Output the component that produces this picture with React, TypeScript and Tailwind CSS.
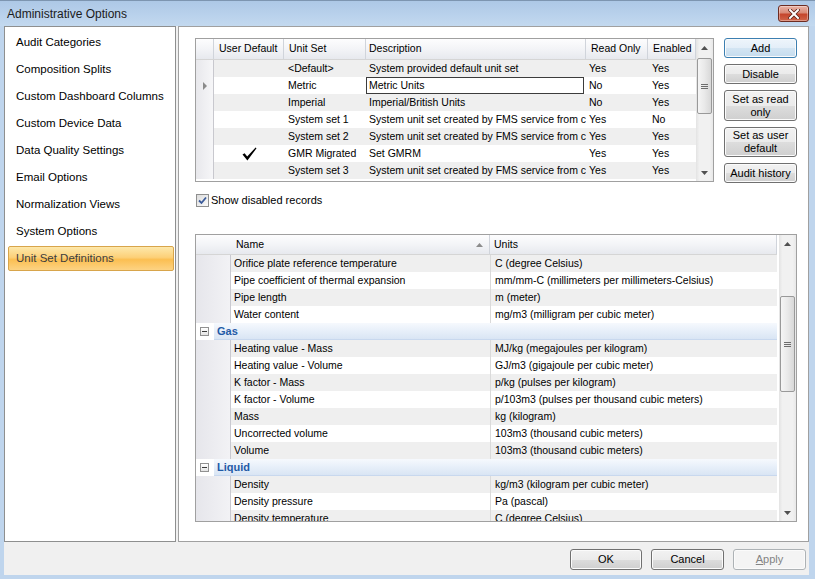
import React from 'react';

const sidebarItems = [
  'Audit Categories',
  'Composition Splits',
  'Custom Dashboard Columns',
  'Custom Device Data',
  'Data Quality Settings',
  'Email Options',
  'Normalization Views',
  'System Options',
  'Unit Set Definitions',
];

type TopRow = { ud?: boolean; us: string; d: string; ro: string; en: string; current?: boolean };

const topRows: TopRow[] = [
  { us: '<Default>', d: 'System provided default unit set', ro: 'Yes', en: 'Yes' },
  { us: 'Metric', d: 'Metric Units', ro: 'No', en: 'Yes', current: true },
  { us: 'Imperial', d: 'Imperial/British Units', ro: 'No', en: 'Yes' },
  { us: 'System set 1', d: 'System unit set created by FMS service from c', ro: 'Yes', en: 'No' },
  { us: 'System set 2', d: 'System unit set created by FMS service from c', ro: 'Yes', en: 'Yes' },
  { us: 'GMR Migrated', d: 'Set GMRM', ro: 'Yes', en: 'Yes', ud: true },
  { us: 'System set 3', d: 'System unit set created by FMS service from c', ro: 'Yes', en: 'Yes' },
];

type BRow = { group?: string; name?: string; units?: string; idx?: number };

const bottomRows: BRow[] = [
  { name: 'Orifice plate reference temperature', units: 'C (degree Celsius)', idx: 0 },
  { name: 'Pipe coefficient of thermal expansion', units: 'mm/mm-C (millimeters per millimeters-Celsius)', idx: 1 },
  { name: 'Pipe length', units: 'm (meter)', idx: 2 },
  { name: 'Water content', units: 'mg/m3 (milligram per cubic meter)', idx: 3 },
  { group: 'Gas' },
  { name: 'Heating value - Mass', units: 'MJ/kg (megajoules per kilogram)', idx: 0 },
  { name: 'Heating value - Volume', units: 'GJ/m3 (gigajoule per cubic meter)', idx: 1 },
  { name: 'K factor - Mass', units: 'p/kg (pulses per kilogram)', idx: 2 },
  { name: 'K factor - Volume', units: 'p/103m3 (pulses per thousand cubic meters)', idx: 3 },
  { name: 'Mass', units: 'kg (kilogram)', idx: 4 },
  { name: 'Uncorrected volume', units: '103m3 (thousand cubic meters)', idx: 5 },
  { name: 'Volume', units: '103m3 (thousand cubic meters)', idx: 6 },
  { group: 'Liquid' },
  { name: 'Density', units: 'kg/m3 (kilogram per cubic meter)', idx: 0 },
  { name: 'Density pressure', units: 'Pa (pascal)', idx: 1 },
  { name: 'Density temperature', units: 'C (degree Celsius)', idx: 2 },
];

const btnBase =
  'flex items-center justify-center text-center rounded-[3px] border text-[11px] leading-[13px] shadow-[inset_0_0_0_1px_#fbfbfb]';
const btnNormal =
  btnBase +
  ' border-[#707070] text-black bg-[linear-gradient(to_bottom,#f2f2f2_0%,#ebebeb_50%,#dddddd_51%,#cfcfcf_100%)]';
const btnDefault =
  btnBase +
  ' border-[#3c7fb1] text-black bg-[linear-gradient(to_bottom,#eef5fb_0%,#e3eef8_50%,#d3e5f3_51%,#c5dcee_100%)]';
const btnDisabled = btnBase + ' border-[#adb2b5] text-[#838383] bg-[#f4f4f4]';

function CloseButton() {
  return (
    <div className="w-[31px] h-[17px] rounded-[3px] border border-[#6d2c22] bg-[linear-gradient(to_bottom,#eab3a6_0%,#d98a77_45%,#c5452c_55%,#d0654a_100%)] shadow-[inset_0_0_0_1px_rgba(255,255,255,0.35)] flex items-center justify-center">
      <svg width="12" height="10" viewBox="0 0 12 10">
        <path d="M2 1 L10 9 M10 1 L2 9" stroke="#5a2118" strokeWidth="3.6" strokeLinecap="square" />
        <path d="M2 1 L10 9 M10 1 L2 9" stroke="#ffffff" strokeWidth="2" strokeLinecap="square" />
      </svg>
    </div>
  );
}

function Scrollbar({ spacer, thumb }: { spacer: string; thumb: string }) {
  return (
    <div className="w-[17px] shrink-0 flex flex-col bg-[linear-gradient(to_right,#e3e3e3,#f1f1f1_20%,#f1f1f1_80%,#e8e8e8)]">
      <div className="h-[17px] shrink-0 flex items-center justify-center">
        <svg width="7" height="4" viewBox="0 0 7 4">
          <path d="M0 4 L3.5 0 L7 4 Z" fill="#505050" />
        </svg>
      </div>
      <div className={spacer + ' shrink-0'} />
      <div
        className={
          thumb +
          ' shrink-0 mx-[1px] rounded-[2px] border border-[#999999] bg-[linear-gradient(to_right,#f5f5f5,#e9e9e9_50%,#d8d8d8)] flex items-center justify-center'
        }
      >
        <div className="flex flex-col gap-[1px]">
          <div className="w-[7px] h-[1px] bg-[#6d6d6d]" />
          <div className="w-[7px] h-[1px] bg-[#6d6d6d]" />
          <div className="w-[7px] h-[1px] bg-[#6d6d6d]" />
        </div>
      </div>
      <div className="flex-1" />
      <div className="h-[17px] shrink-0 flex items-center justify-center">
        <svg width="7" height="4" viewBox="0 0 7 4">
          <path d="M0 0 L3.5 4 L7 0 Z" fill="#505050" />
        </svg>
      </div>
    </div>
  );
}

const hdrCell =
  'h-full flex items-center border-r border-[#d0d4db] bg-[linear-gradient(to_bottom,#fdfdfe,#f3f4f7_50%,#e7e9ee)] pl-[5px] whitespace-nowrap overflow-hidden';

function CheckMark() {
  return (
    <svg width="15" height="14" viewBox="0 0 15 14">
      <path d="M0.5 7.5 L2.6 6.2 L5.2 9.6 L13.6 0.5 L14.5 1.3 L5.4 13.5 Z" fill="#000000" />
    </svg>
  );
}

function TopGrid() {
  return (
    <div className="w-[519px] h-[144px] border border-[#a0a0a0] bg-white flex text-[10.5px]">
      <div className="flex-1 flex flex-col overflow-hidden">
        <div className="h-[21px] shrink-0 flex border-b border-[#d5d5d5]">
          <div className={hdrCell + ' w-[18px]'} />
          <div className={hdrCell + ' w-[70px]'}>User Default</div>
          <div className={hdrCell + ' w-[82px]'}>Unit Set</div>
          <div className={hdrCell + ' w-[220px] !pl-[3px]'}>Description</div>
          <div className={hdrCell + ' w-[62px]'}>Read Only</div>
          <div className={hdrCell + ' w-[48px]'}>Enabled</div>
        </div>
        {topRows.map((r, i) => (
          <div key={i} className={'h-[17px] shrink-0 flex ' + (i % 2 === 0 ? 'bg-[#efefef]' : 'bg-white')}>
            <div className="w-[18px] h-full flex items-center pl-[7px] border-r border-[#c8c8ce] bg-[linear-gradient(to_right,#e8e8ec,#f6f6f8)]">
              {r.current && (
                <svg width="4" height="8" viewBox="0 0 4 8">
                  <path d="M0 0 L4 4 L0 8 Z" fill="#8a8a8a" />
                </svg>
              )}
            </div>
            <div className="w-[70px] h-full flex items-center justify-center">{r.ud && <CheckMark />}</div>
            <div className="w-[82px] h-full flex items-center pl-[4px] whitespace-nowrap overflow-hidden">{r.us}</div>
            <div className="w-[220px] h-full flex items-center whitespace-nowrap overflow-hidden">
              {r.current ? (
                <div className="w-[218px] h-[17px] border border-[#3c3c3c] flex items-center pl-[2px] bg-white">{r.d}</div>
              ) : (
                <span className="pl-[3px]">{r.d}</span>
              )}
            </div>
            <div className="w-[62px] h-full flex items-center pl-[3px]">{r.ro}</div>
            <div className="w-[48px] h-full flex items-center pl-[4px]">{r.en}</div>
          </div>
        ))}
      </div>
      <Scrollbar spacer="h-[2px]" thumb="h-[56px]" />
    </div>
  );
}

function MinusBox() {
  return (
    <div className="w-[9px] h-[9px] border border-[#919191] bg-[linear-gradient(to_bottom,#ffffff,#e4e4e4)] flex items-center justify-center">
      <div className="w-[5px] h-[1px] bg-[#3a3a3a]" />
    </div>
  );
}

function BottomGrid() {
  return (
    <div className="w-[602px] h-[288px] border border-[#a0a0a0] bg-white flex text-[10.5px]">
      <div className="flex-1 flex flex-col overflow-hidden">
        <div className="h-[20px] shrink-0 flex border-b border-[#d5d5d5] mr-[2px]">
          <div className={hdrCell + ' w-[294px] !pl-[40px] justify-between pr-[6px]'}>
            <span>Name</span>
            <svg width="7" height="4" viewBox="0 0 7 4">
              <path d="M0 4 L3.5 0 L7 4 Z" fill="#8c8c8c" />
            </svg>
          </div>
          <div className={hdrCell + ' flex-1 !pl-[4px]'}>Units</div>
        </div>
        {bottomRows.map((r, i) =>
          r.group ? (
            <div key={i} className="h-[17px] shrink-0 flex bg-white mr-[2px]">
              <div className="w-[18px] h-full flex items-center pl-[4px]">
                <MinusBox />
              </div>
              <div className="flex-1 h-full flex items-center pl-[3px] font-bold text-[11px] text-[#1f5aa6] bg-[linear-gradient(to_bottom,#f6f9fd,#e7eff9_50%,#d9e5f4)] border-b border-[#c8d8ee]">
                {r.group}
              </div>
            </div>
          ) : (
            <div key={i} className={'h-[17px] shrink-0 flex mr-[2px] ' + ((r.idx ?? 0) % 2 === 0 ? 'bg-[#efefef]' : 'bg-white')}>
              <div className="w-[35px] h-full border-r border-[#c9c9d0] bg-[linear-gradient(to_right,#e6e6eb,#f2f2f5)]" />
              <div className="w-[259px] h-full flex items-center pl-[3px] whitespace-nowrap overflow-hidden">{r.name}</div>
              <div className="flex-1 h-full flex items-center pl-[4px] border-l border-[#dadada] whitespace-nowrap overflow-hidden">
                {r.units}
              </div>
            </div>
          )
        )}
      </div>
      <Scrollbar spacer="h-[44px]" thumb="h-[96px]" />
    </div>
  );
}

export default function App() {
  return (
    <div className="w-[815px] h-[579px] flex flex-col bg-[#bfd5ed] border-t border-[#7d95b0] font-['Liberation_Sans',Arial,sans-serif] text-[11px] text-black overflow-hidden select-none">
      <div className="h-[25px] shrink-0 flex items-center justify-between pl-[7px] pr-[6px] bg-[linear-gradient(to_bottom,#adc8e6,#bad2ec_60%,#c3d9ef)]">
        <span className="text-[12px] text-[#1b1b1b]">Administrative Options</span>
        <CloseButton />
      </div>
      <div className="flex-1 flex flex-col ml-[4px] mr-[6px] mb-[4px] bg-[#f0f0f0]">
        <div className="h-[516px] shrink-0 flex gap-[2px]">
          <div className="w-[172px] h-full border border-[#8e8f8f] bg-white flex flex-col pt-[2px] text-[11.5px]">
            {sidebarItems.map((it) =>
              it === 'Unit Set Definitions' ? (
                <div key={it} className="h-[27px] flex items-center">
                  <div className="h-[25px] flex-1 ml-[3px] mr-[1px] flex items-center pl-[7px] rounded-[2px] border border-[#d8a54b] bg-[linear-gradient(to_bottom,#fde8ab,#fcd078_45%,#fbbf52_55%,#fdd383)] text-[#3d3d3d]">
                    {it}
                  </div>
                </div>
              ) : (
                <div key={it} className="h-[27px] flex items-center pl-[11px] whitespace-nowrap">
                  {it}
                </div>
              )
            )}
          </div>
          <div className="flex-1 h-full border border-[#a0a0a0] bg-white flex flex-col pl-[16px] pt-[11px]">
            <div className="flex gap-[10px]">
              <TopGrid />
              <div className="w-[73px] flex flex-col gap-[6px]">
                <div className={btnDefault + ' h-[20px]'}>Add</div>
                <div className={btnNormal + ' h-[20px]'}>Disable</div>
                <div className={btnNormal + ' h-[31px]'}>
                  Set as read
                  <br />
                  only
                </div>
                <div className={btnNormal + ' h-[30px]'}>
                  Set as user
                  <br />
                  default
                </div>
                <div className={btnNormal + ' h-[20px]'}>Audit history</div>
              </div>
            </div>
            <div className="mt-[11px] h-[13px] flex items-center gap-[2px] pl-[1px]">
              <div className="w-[13px] h-[13px] border border-[#8f8f8f] bg-[linear-gradient(to_bottom_right,#dcdcdc,#fbfbfb)] flex items-center justify-center">
                <svg width="9" height="9" viewBox="0 0 9 9">
                  <path d="M1 4.5 L3.5 7 L8 1.5" fill="none" stroke="#3a5a9a" strokeWidth="1.8" />
                </svg>
              </div>
              <span className="leading-[13px]">Show disabled records</span>
            </div>
            <div className="mt-[27px]">
              <BottomGrid />
            </div>
          </div>
        </div>
        <div className="flex-1 flex justify-end items-start pt-[7px] pr-[3px] gap-[9px]">
          <div className={btnNormal + ' w-[72px] h-[21px]'}>OK</div>
          <div className={btnNormal + ' w-[73px] h-[21px]'}>Cancel</div>
          <div className={btnDisabled + ' w-[73px] h-[21px]'}>
            <span>
              <span className="underline">A</span>pply
            </span>
          </div>
        </div>
      </div>
    </div>
  );
}
